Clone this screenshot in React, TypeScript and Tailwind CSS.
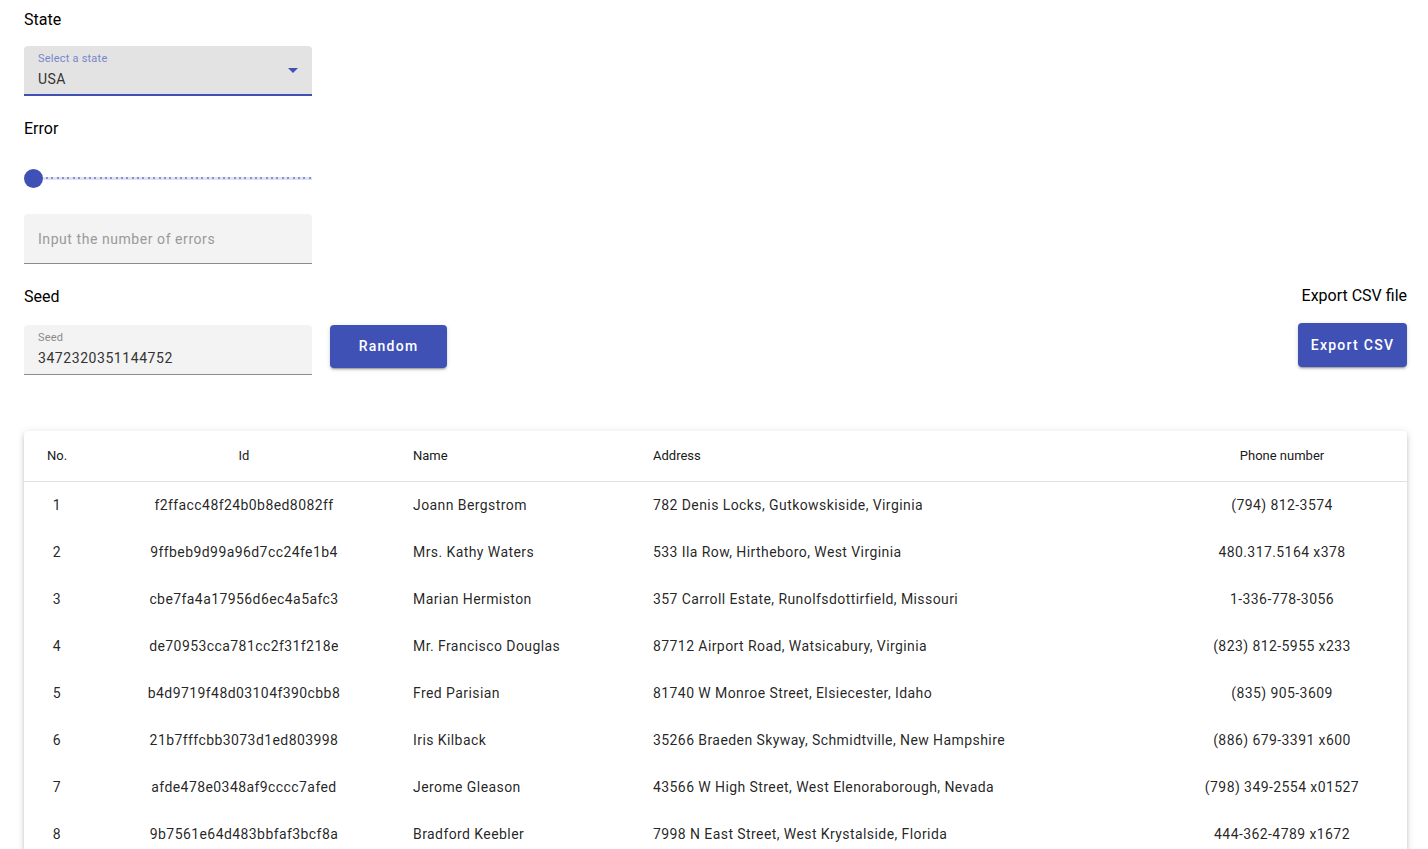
import React from "react";

const ROWS = [
  { id: "f2ffacc48f24b0b8ed8082ff", name: "Joann Bergstrom", address: "782 Denis Locks, Gutkowskiside, Virginia", phone: "(794) 812-3574" },
  { id: "9ffbeb9d99a96d7cc24fe1b4", name: "Mrs. Kathy Waters", address: "533 Ila Row, Hirtheboro, West Virginia", phone: "480.317.5164 x378" },
  { id: "cbe7fa4a17956d6ec4a5afc3", name: "Marian Hermiston", address: "357 Carroll Estate, Runolfsdottirfield, Missouri", phone: "1-336-778-3056" },
  { id: "de70953cca781cc2f31f218e", name: "Mr. Francisco Douglas", address: "87712 Airport Road, Watsicabury, Virginia", phone: "(823) 812-5955 x233" },
  { id: "b4d9719f48d03104f390cbb8", name: "Fred Parisian", address: "81740 W Monroe Street, Elsiecester, Idaho", phone: "(835) 905-3609" },
  { id: "21b7fffcbb3073d1ed803998", name: "Iris Kilback", address: "35266 Braeden Skyway, Schmidtville, New Hampshire", phone: "(886) 679-3391 x600" },
  { id: "afde478e0348af9cccc7afed", name: "Jerome Gleason", address: "43566 W High Street, West Elenoraborough, Nevada", phone: "(798) 349-2554 x01527" },
  { id: "9b7561e64d483bbfaf3bcf8a", name: "Bradford Keebler", address: "7998 N East Street, West Krystalside, Florida", phone: "444-362-4789 x1672" },
];

const DOTS = Array.from({ length: 50 }, (_, i) => i);

function SectionLabel({ children }: { children: React.ReactNode }) {
  return (
    <div className="h-6 leading-6 text-[16px] font-normal text-black">
      {children}
    </div>
  );
}

export default function App() {
  return (
    <div
      className="min-h-[849px] bg-white pl-6 pr-[21px] pt-[8px] text-[rgba(0,0,0,0.87)]"
      style={{ fontFamily: "Roboto, 'Liberation Sans', sans-serif" }}
    >
      {/* State */}
      <SectionLabel>State</SectionLabel>
      <div className="mt-[14px] relative w-[288px] h-[50px] bg-[#e3e3e3] rounded-t-[4px] border-b-2 border-[#3f51b5] pl-[14px]">
        <div className="pt-[7px] text-[11px] leading-3 tracking-[0.02em] text-[#7986cb]">
          Select a state
        </div>
        <div className="mt-[6px] text-[14px] leading-4 tracking-[0.03em] text-[#333]">
          USA
        </div>
        <div className="absolute right-[14px] top-[22px] w-0 h-0 border-l-[5px] border-r-[5px] border-t-[5px] border-l-transparent border-r-transparent border-t-[#3f51b5]" />
      </div>

      {/* Error */}
      <div className="mt-[21px]">
        <SectionLabel>Error</SectionLabel>
      </div>
      <div className="mt-[23px] h-[28px] w-[288px] flex items-center">
        <div className="w-[19px] h-[19px] rounded-full bg-[#3f51b5] shrink-0" />
        <div className="flex-1 h-[3px] bg-[#dfe2f3] flex items-center justify-between pl-[3px] pr-[1px]">
          {DOTS.map((d) => (
            <span key={d} className="w-[2px] h-[2px] bg-[#8592d6]" />
          ))}
        </div>
      </div>
      <div className="mt-[22px] w-[288px] h-[50px] bg-[#f3f3f3] rounded-t-[4px] border-b border-[#8c8c8c] pl-[14px] pt-[2px] flex items-center">
        <span className="text-[14px] tracking-[0.04em] text-[#9a9a9a]">
          Input the number of errors
        </span>
      </div>

      {/* Seed + export */}
      <div className="mt-[21px] flex justify-between">
        <div>
          <SectionLabel>Seed</SectionLabel>
          <div className="mt-[16px] flex gap-[18px]">
            <div className="w-[288px] h-[50px] bg-[#f3f3f3] rounded-t-[4px] border-b border-[#8c8c8c] pl-[14px]">
              <div className="pt-[7px] text-[11px] leading-3 tracking-[0.02em] text-[#8a8a8a]">
                Seed
              </div>
              <div className="mt-[6px] text-[14px] leading-4 tracking-[0.04em] text-[#333]">
                3472320351144752
              </div>
            </div>
            <button className="w-[117px] h-[43px] rounded-[4px] bg-[#3f51b5] text-white text-[14px] font-medium tracking-[0.09em] shadow-[0_3px_1px_-2px_rgba(0,0,0,0.2),0_2px_2px_0_rgba(0,0,0,0.14),0_1px_5px_0_rgba(0,0,0,0.12)]">
              Random
            </button>
          </div>
        </div>
        <div className="flex flex-col items-end -mt-px">
          <SectionLabel>Export CSV file</SectionLabel>
          <button className="mt-[15px] w-[109px] h-[44px] rounded-[4px] bg-[#3f51b5] text-white text-[14px] font-medium tracking-[0.09em] shadow-[0_3px_1px_-2px_rgba(0,0,0,0.2),0_2px_2px_0_rgba(0,0,0,0.14),0_1px_5px_0_rgba(0,0,0,0.12)]">
            Export CSV
          </button>
        </div>
      </div>

      {/* Table */}
      <div className="mt-[56px] w-[1383px] bg-white rounded-[4px] shadow-[0_3px_3px_-2px_rgba(0,0,0,0.2),0_3px_4px_0_rgba(0,0,0,0.14),0_1px_8px_0_rgba(0,0,0,0.12)]">
        <table className="w-full table-fixed border-collapse">
          <colgroup>
            <col className="w-[66px]" />
            <col className="w-[308px]" />
            <col className="w-[239px]" />
            <col className="w-[520px]" />
            <col className="w-[250px]" />
          </colgroup>
          <thead>
            <tr className="h-[50px] border-b border-[#e0e0e0] text-[13px] text-[#1a1a1a]">
              <th className="text-center font-normal">No.</th>
              <th className="text-center font-normal">Id</th>
              <th className="text-left font-normal pl-[15px]">Name</th>
              <th className="text-left font-normal pl-[16px]">Address</th>
              <th className="text-center font-normal">Phone number</th>
            </tr>
          </thead>
          <tbody>
            {ROWS.map((r, i) => (
              <tr key={r.id} className="h-[47px] text-[14px] tracking-[0.03em] text-[rgba(0,0,0,0.87)]">
                <td className="text-center pt-[2px]">{i + 1}</td>
                <td className="text-center pt-[2px]">{r.id}</td>
                <td className="text-left pl-[15px] pt-[2px]">{r.name}</td>
                <td className="text-left pl-[16px] pt-[2px]">{r.address}</td>
                <td className="text-center pt-[2px]">{r.phone}</td>
              </tr>
            ))}
          </tbody>
        </table>
      </div>
    </div>
  );
}
